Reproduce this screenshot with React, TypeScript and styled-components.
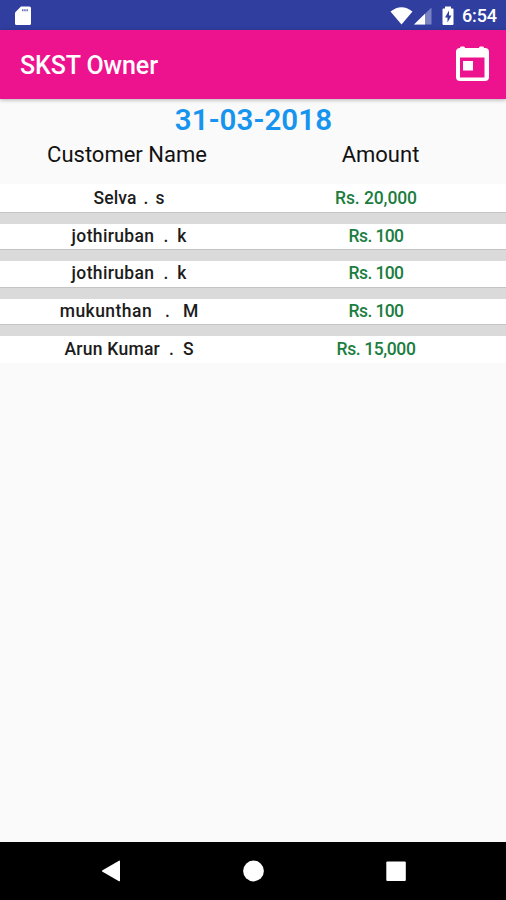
import React from 'react';
import styled, { createGlobalStyle } from 'styled-components';

const GlobalStyle = createGlobalStyle`
  * { box-sizing: border-box; }
  body { margin: 0; background: #fafafa; font-family: Roboto, sans-serif; }
`;

const Screen = styled.div`
  display: flex;
  flex-direction: column;
  width: 506px;
  height: 900px;
  overflow: hidden;
  background: #fafafa;
`;

const StatusBar = styled.header`
  flex: none;
  display: flex;
  align-items: center;
  justify-content: space-between;
  height: 30px;
  padding: 1px 10px 0 15px;
  background: #303f9f;
  color: #fff;
`;

const StatusIcons = styled.div`
  display: flex;
  align-items: center;
`;

const Clock = styled.span`
  margin-left: 7px;
  width: 34px;
  font-size: 18px;
  font-weight: 500;
  line-height: 24px;
  letter-spacing: -0.15px;
`;

const AppBar = styled.div`
  flex: none;
  display: flex;
  align-items: center;
  justify-content: space-between;
  height: 69px;
  padding: 0 14px 0 20px;
  background: #ed128d;
  color: #fff;
  box-shadow: 0 1px 4px rgba(0, 0, 0, 0.3);
`;

const Title = styled.h1`
  margin: 3px 0 0;
  font-size: 25px;
  font-weight: 500;
  line-height: 30px;
  letter-spacing: -0.1px;
`;

const DateHeading = styled.h2`
  margin: 4px 0 0 1px;
  text-align: center;
  color: #1794ee;
  font-size: 29.5px;
  font-weight: 600;
  line-height: 34px;
  letter-spacing: 0.1px;
`;

const Columns = styled.div`
  display: grid;
  grid-template-columns: 254px 253px;
  height: 47px;
  padding-top: 3px;
  color: #111;
  font-size: 22px;
  line-height: 30px;
  text-align: center;
`;

const List = styled.main`
  flex: 1;
`;

const Row = styled.div`
  display: grid;
  grid-template-columns: 258px 236px;
  align-items: center;
  height: 25.5px;
  background: #fff;
  font-size: 17.5px;
  font-weight: 500;
  line-height: 25px;
  text-align: center;

  &:first-child { height: 27.5px; padding-top: 2px; }
  &:last-child { height: 27px; padding-bottom: 1px; }
`;

const Divider = styled.div`
  height: 12px;
  background: #dadada;
  border-top: 1px solid #c4c4c4;
`;

const Customer = styled.div<{ $gap: number }>`
  display: flex;
  justify-content: center;
  gap: ${({ $gap }) => $gap}px;
  color: #1c1c1c;
`;

const Name = styled.span<{ $tracking: number }>`
  letter-spacing: ${({ $tracking }) => $tracking}px;
`;

const Amount = styled.div<{ $tracking: number }>`
  color: #1c7d40;
  letter-spacing: ${({ $tracking }) => $tracking}px;
`;

const NavBar = styled.nav`
  flex: none;
  display: grid;
  grid-template-columns: 142px 142px 142px;
  justify-content: center;
  justify-items: center;
  align-items: center;
  height: 58px;
  padding-left: 0;
  background: #000;
`;

const payments = [
  { name: 'Selva', initial: 's', amount: 'Rs. 20,000', gap: 7, tracking: 0.1, amountTracking: -0.1 },
  { name: 'jothiruban', initial: 'k', amount: 'Rs. 100', gap: 9, tracking: 0.35, amountTracking: -0.6 },
  { name: 'jothiruban', initial: 'k', amount: 'Rs. 100', gap: 9, tracking: 0.35, amountTracking: -0.6 },
  { name: 'mukunthan', initial: 'M', amount: 'Rs. 100', gap: 13, tracking: 0.45, amountTracking: -0.6 },
  { name: 'Arun Kumar', initial: 'S', amount: 'Rs. 15,000', gap: 9, tracking: 0.25, amountTracking: -0.4 },
];

export default function App() {
  return (
    <Screen>
      <GlobalStyle />
      <StatusBar>
        <svg width="16" height="20" viewBox="0 0 16 20">
          <path d="M6 0.5h8.3Q16 .5 16 2v15.500Q16 19 14.500 19h-13Q0 19 0 17.500V6.500z" fill="#fff" />
          <path d="M7 4.300h6" stroke="#303f9f" strokeWidth="2" strokeDasharray="1.500 .7" opacity=".75" />
        </svg>
        <StatusIcons>
          <svg width="65" height="20" viewBox="0 0 65 20">
            <path d="M.5 5.500Q11.500 -3 22.500 5.500L11.500 18.500z" fill="#fff" />
            <path d="M24 18.500L41.500 1.500v17z" fill="#7983c2" />
            <path d="M24 18.500L35 7.800v10.700z" fill="#fff" />
            <path d="M55 .5h6v2h1.500q1 0 1 1v14.500q0 1-1 1h-9q-1 0-1-1V3.500q0-1 1-1H55z" fill="#fff" />
            <path d="M59 4.500l-4 7h2.500v5l4-7H59z" fill="#303f9f" />
          </svg>
          <Clock>6:54</Clock>
        </StatusIcons>
      </StatusBar>
      <AppBar>
        <Title>SKST Owner</Title>
        <svg width="40" height="40" viewBox="0 0 40 40">
          <path
            fill="#fff"
            fillRule="evenodd"
            d="M9 1.500h3q1 0 1 1.500h14q0-1.500 1-1.500h3q1 0 1 1.500h1q4 0 4 4v25q0 4-4 4H8q-4 0-4-4V7q0-4 4-4 0-1.500 1-1.500zM8 12.500v20h24.500v-20zM11 16h10v9.500H11z"
          />
        </svg>
      </AppBar>
      <DateHeading>31-03-2018</DateHeading>
      <Columns>
        <span>Customer Name</span>
        <span>Amount</span>
      </Columns>
      <List>
        {payments.map((p, i) => (
          <React.Fragment key={i}>
            {i > 0 && <Divider />}
            <Row>
              <Customer $gap={p.gap}>
                <Name $tracking={p.tracking}>{p.name}</Name>
                <span>.</span>
                <span>{p.initial}</span>
              </Customer>
              <Amount $tracking={p.amountTracking}>{p.amount}</Amount>
            </Row>
          </React.Fragment>
        ))}
      </List>
      <NavBar>
        <svg width="22" height="22" viewBox="0 0 22 22">
          <path d="M2.500 10.200L19 .7q1-.5 1 .6v19.400q0 1-1 .5L2.500 11.800q-1.300-.8 0-1.600z" fill="#fff" />
        </svg>
        <svg width="22" height="22" viewBox="0 0 22 22">
          <circle cx="11.500" cy="11" r="10.400" fill="#fff" />
        </svg>
        <svg width="22" height="22" viewBox="0 0 22 22">
          <rect x="2.300" y="1.500" width="19.500" height="19.500" rx="1" fill="#fff" />
        </svg>
      </NavBar>
    </Screen>
  );
}
